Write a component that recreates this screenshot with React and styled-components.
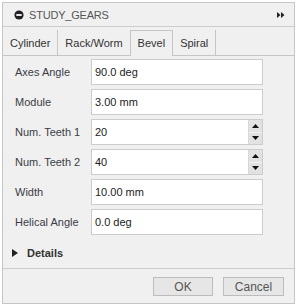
import React from "react";
import styled, { createGlobalStyle } from "styled-components";

const Global = createGlobalStyle`
  html, body { margin: 0; padding: 0; background: #ffffff; }
  body { font-family: "Liberation Sans", Arial, sans-serif; font-size: 11px; }
  * { box-sizing: border-box; }
`;

const Dialog = styled.div`
  margin: 2px 0 0 2px;
  width: 293px;
  height: 302px;
  border: 1px solid #c6c6c6;
  background: #f0f0f0;
  display: flex;
  flex-direction: column;
`;

const TitleBar = styled.div`
  height: 24px;
  border-bottom: 1px solid #cdcdcd;
  display: flex;
  align-items: center;
  padding: 0 9px 0 11px;
  gap: 5px;
  color: #555;
  font-size: 11px;
`;

const TitleText = styled.span`
  flex: 1;
  letter-spacing: -0.2px;
`;

const TabBar = styled.div`
  height: 29px;
  border-bottom: 1px solid #c6c6c6;
  display: flex;
  align-items: flex-end;
`;

const Tab = styled.div`
  height: ${(p) => (p.$active ? 26 : 25)}px;
  margin-bottom: ${(p) => (p.$active ? -1 : 0)}px;
  margin-left: ${(p) => (p.$active ? -1 : 0)}px;
  padding: 0 7px;
  display: flex;
  align-items: center;
  color: #333;
  background: #f0f0f0;
  border-right: 1px solid #c6c6c6;
  border-left: ${(p) => (p.$active ? "1px solid #c6c6c6" : "none")};
  border-top: ${(p) => (p.$active ? "1px solid #c6c6c6" : "none")};
  padding-bottom: ${(p) => (p.$active ? 1 : 0)}px;
`;

const Content = styled.div`
  flex: 1;
  padding: 3px 12px 0 12px;
  display: flex;
  flex-direction: column;
`;

const Grid = styled.div`
  display: grid;
  grid-template-columns: 76px 172px;
  row-gap: 4px;
  align-items: center;
`;

const Label = styled.div`
  color: #3a3d45;
`;

const InputBox = styled.div`
  height: 26px;
  border: 1px solid #cccccc;
  background: #fff;
  display: flex;
  align-items: stretch;
`;

const InputText = styled.div`
  flex: 1;
  display: flex;
  align-items: center;
  padding-left: 3px;
  color: #222;
`;

const Spinner = styled.div`
  width: 14px;
  display: flex;
  flex-direction: column;
  background: #e2e2e2;
  border-left: 1px solid #d8d8d8;
`;

const SpinBtn = styled.div`
  flex: 1;
  display: flex;
  align-items: center;
  justify-content: center;
  border-top: ${(p) => (p.$down ? "1px solid #f2f2f2" : "none")};
`;

const DetailsRow = styled.div`
  margin-top: 8px;
  margin-left: -3px;
  height: 20px;
  display: flex;
  align-items: center;
  gap: 9px;
  font-weight: bold;
  color: #333;
`;

const Footer = styled.div`
  height: 35px;
  border-top: 1px solid #cdcdcd;
  display: flex;
  justify-content: flex-end;
  align-items: flex-start;
  padding: 8px 10px 0 0;
  gap: 10px;
`;

const Button = styled.div`
  width: ${(p) => p.$w}px;
  height: 19px;
  border: 1px solid #bdbdbd;
  background: #e6e6e6;
  color: #555;
  font-size: 12px;
  display: flex;
  align-items: center;
  justify-content: center;
`;

const Tri = ({ dir }) => (
  <svg width="7" height="4" viewBox="0 0 7 4">
    {dir === "up" ? <path d="M3.5 0 L7 4 L0 4 Z" fill="#111" /> : <path d="M0 0 L7 0 L3.5 4 Z" fill="#111" />}
  </svg>
);

const fields = [
  { label: "Axes Angle", value: "90.0 deg" },
  { label: "Module", value: "3.00 mm" },
  { label: "Num. Teeth 1", value: "20", spin: true },
  { label: "Num. Teeth 2", value: "40", spin: true },
  { label: "Width", value: "10.00 mm" },
  { label: "Helical Angle", value: "0.0 deg" },
];

const tabs = ["Cylinder", "Rack/Worm", "Bevel", "Spiral"];

export default function App() {
  return (
    <>
      <Global />
      <Dialog>
        <TitleBar>
          <svg width="10" height="10" viewBox="0 0 10 10">
            <circle cx="5" cy="5" r="4.6" fill="#222" />
            <rect x="2.3" y="4.1" width="5.4" height="1.8" fill="#fff" />
          </svg>
          <TitleText>STUDY_GEARS</TitleText>
          <svg width="8" height="6" viewBox="0 0 8 6">
            <path d="M0 0 L3.5 3 L0 6 Z M4 0 L7.5 3 L4 6 Z" fill="#222" />
          </svg>
        </TitleBar>
        <TabBar>
          {tabs.map((t) => (
            <Tab key={t} $active={t === "Bevel"}>
              {t}
            </Tab>
          ))}
        </TabBar>
        <Content>
          <Grid>
            {fields.map((f) => (
              <React.Fragment key={f.label}>
                <Label>{f.label}</Label>
                <InputBox>
                  <InputText>{f.value}</InputText>
                  {f.spin && (
                    <Spinner>
                      <SpinBtn>
                        <Tri dir="up" />
                      </SpinBtn>
                      <SpinBtn $down>
                        <Tri dir="down" />
                      </SpinBtn>
                    </Spinner>
                  )}
                </InputBox>
              </React.Fragment>
            ))}
          </Grid>
          <DetailsRow>
            <svg width="6" height="8" viewBox="0 0 6 8">
              <path d="M0 0 L6 4 L0 8 Z" fill="#222" />
            </svg>
            Details
          </DetailsRow>
        </Content>
        <Footer>
          <Button $w={60}>OK</Button>
          <Button $w={61}>Cancel</Button>
        </Footer>
      </Dialog>
    </>
  );
}
